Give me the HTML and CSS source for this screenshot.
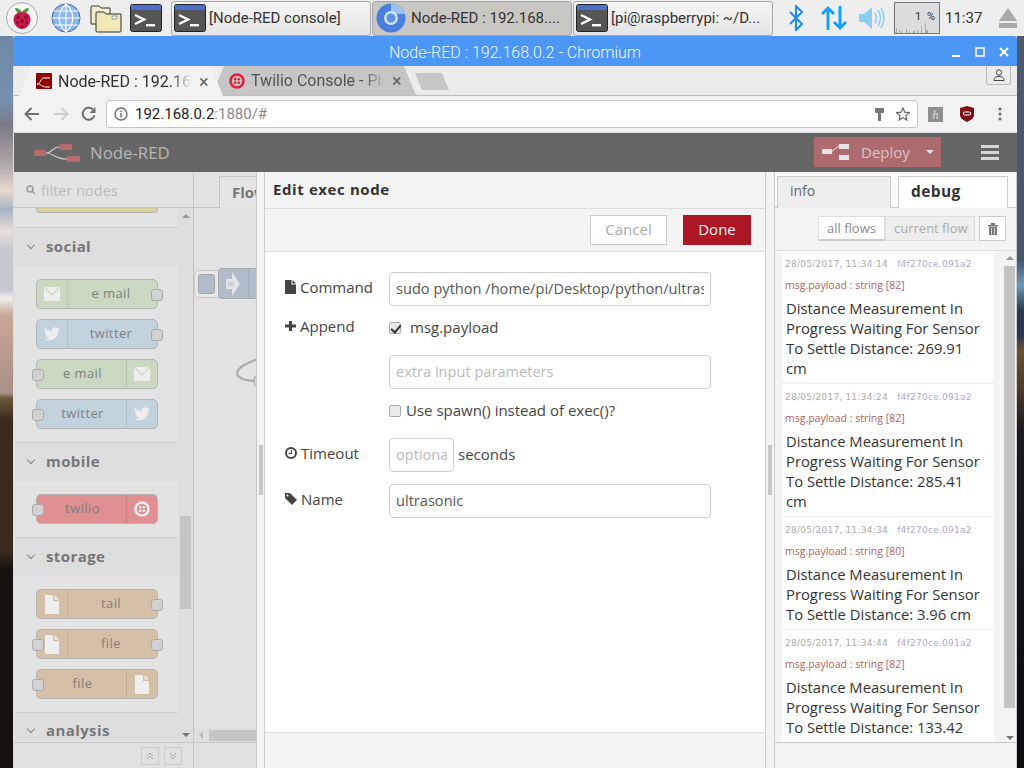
FILE: index.html
```html
<!DOCTYPE html>
<html lang="en">
<head>
    <meta charset="UTF-8">
    <title>Node-RED : 192.168.0.2 - Chromium</title>
    <link rel="stylesheet" href="styles.css">
</head>
<body>
    <svg class="defs" width="0" height="0">
        <symbol id="term" viewBox="0 0 32 28">
            <rect x=".5" y=".5" width="31" height="27" rx="2" fill="#555" stroke="#222"/>
            <rect x="1" y="1" width="30" height="5" fill="#4f6fd0"/>
            <path d="M5 11l9 4.5-9 4.5" fill="none" stroke="#fff" stroke-width="2.4"/>
            <rect x="16" y="20" width="9" height="2.4" fill="#fff"/>
        </symbol>
        <symbol id="mail" viewBox="0 0 16 14">
            <rect width="16" height="14" fill="#eee"/>
            <path d="M0 0l8 8 8-8" fill="none" stroke="currentColor" stroke-width="1.2"/>
        </symbol>
        <symbol id="bird" viewBox="0 0 16 14">
            <path d="M16 2c-.6.3-1.2.4-1.9.5.7-.4 1.2-1 1.4-1.8-.6.4-1.3.7-2.1.8C12.8.6 12 .2 11.1.2 9.3.2 7.8 1.700 7.8 3.500c0 .3 0 .5.1.8C5.200 4.100 2.800 2.800 1.100.8.8 1.300.7 1.900.7 2.500c0 1.100.6 2.100 1.500 2.700-.5 0-1-.2-1.500-.4 0 1.600 1.100 2.900 2.600 3.200-.5.1-1 .2-1.500.1.4 1.300 1.600 2.200 3.100 2.300C3.700 11.500 2 12.100.1 11.900c1.500.9 3.200 1.500 5 1.500 6 0 9.300-5 9.300-9.300v-.4c.7-.5 1.200-1 1.600-1.700z" fill="#eee"/>
        </symbol>
        <symbol id="doc" viewBox="0 0 14 19">
            <path d="M0 0h8v6h6v13H0z" fill="#eee"/>
            <path d="M9.500 0L14 4.500H9.500z" fill="#eee"/>
        </symbol>
        <symbol id="twilio" viewBox="0 0 16 16">
            <circle cx="8" cy="8" r="6.500" fill="none" stroke="currentColor" stroke-width="2.6"/>
            <circle cx="6.200" cy="6.200" r="1.300" fill="currentColor"/><circle cx="9.800" cy="6.200" r="1.300" fill="currentColor"/>
            <circle cx="6.200" cy="9.800" r="1.300" fill="currentColor"/><circle cx="9.800" cy="9.800" r="1.300" fill="currentColor"/>
        </symbol>
        <symbol id="dag" viewBox="0 0 46 18">
            <rect x="0" y="6" width="12" height="6" rx="1.500" fill="#b96a6e"/>
            <rect x="25" y="0" width="13" height="6" rx="1.500" fill="#b96a6e"/>
            <rect x="33" y="12" width="13" height="6" rx="1.500" fill="#b96a6e"/>
            <path d="M12 9c7 0 6-6 13-6M12 9c8 0 8 6 21 6" fill="none" stroke="#ccc" stroke-width="1.2"/>
        </symbol>
    </svg>

    <!-- desktop panel -->
    <div class="panel">
        <div class="launchers">
            <svg class="launch-pi" width="32" height="32" viewBox="0 0 32 32">
                <circle cx="16" cy="16" r="15.500" fill="#f4f4f4" stroke="#aaa"/>
                <path d="M9 6c3 0 5 1.500 7 4 2-2.500 4-4 7-4-.5 3.500-3.500 6-7 6s-6.500-2.500-7-6z" fill="#4c9a3a"/>
                <path d="M16 10c5 0 8.500 3 8.500 7.500S20.500 27 16 27s-8.500-5-8.500-9.500S11 10 16 10z" fill="#c51a4a"/>
                <circle cx="12" cy="15" r="2" fill="#8f0f33"/><circle cx="20" cy="15" r="2" fill="#8f0f33"/>
                <circle cx="16" cy="19" r="2" fill="#8f0f33"/><circle cx="11.500" cy="20.500" r="1.500" fill="#8f0f33"/><circle cx="20.500" cy="20.500" r="1.500" fill="#8f0f33"/><circle cx="16" cy="24.500" r="1.500" fill="#8f0f33"/>
            </svg>
            <svg class="launch-globe" width="30" height="30" viewBox="0 0 30 30">
                <circle cx="15" cy="15" r="14" fill="#8db8ee" stroke="#3a66a8"/>
                <path d="M15 1v28M1 15h28M3 8h24M3 22h24M15 1c-9 8-9 20 0 28M15 1c9 8 9 20 0 28" fill="none" stroke="#fff" stroke-width="1.1"/>
            </svg>
            <svg class="launch-folder" width="32" height="30" viewBox="0 0 32 30">
                <path d="M1 4q0-1 1-1h7l2 2h9v16H1z" fill="#f3edcf" stroke="#333"/>
                <path d="M6 10q0-1 1-1h7l2 2h15v17q0 1-1 1H7q-1 0-1-1z" fill="#f1e8b8" stroke="#333"/>
                <rect x="22" y="13" width="5" height="3" rx="1" fill="#fff" stroke="#555" stroke-width=".6"/>
            </svg>
            <svg class="launch-term" width="32" height="28"><use href="#term"/></svg>
        </div>
        <div class="task"><svg width="32" height="28"><use href="#term"/></svg><span>[Node-RED console]</span></div>
        <div class="task task-on">
            <svg width="30" height="30" viewBox="0 0 30 30">
                <circle cx="15" cy="15" r="14.500" fill="#4a7fe0"/>
                <path d="M15 .5A14.500 14.500 0 0 1 29 11H15z" fill="#9dc1ee"/>
                <circle cx="15" cy="15" r="7" fill="#cfe0f6"/><circle cx="15" cy="15" r="4.500" fill="#5b93e8"/>
            </svg>
            <span>Node-RED : 192.168....</span>
        </div>
        <div class="task"><svg width="32" height="28"><use href="#term"/></svg><span>[pi@raspberrypi: ~/D...</span></div>
        <div class="tray-icons">
            <svg class="sys-bt" width="16" height="26" viewBox="0 0 16 26"><path d="M2 7l12 12-6 6V1l6 6L2 19" fill="none" stroke="#1c8cf0" stroke-width="2"/></svg>
            <svg class="sys-net" width="26" height="26" viewBox="0 0 26 26"><path d="M7 25V3M1 9l6-6 6 6M19 1v22M13 17l6 6 6-6" fill="none" stroke="#1ca0f5" stroke-width="3"/></svg>
            <svg class="sys-vol" width="26" height="24" viewBox="0 0 26 24"><path d="M0 8h5l8-7v22l-8-7H0z" fill="#8ccdf8"/><path d="M16 7q3 5 0 10M19 4q5 8 0 16M22 2q6 10 0 20" fill="none" stroke="#8ccdf8" stroke-width="1.5"/></svg>
            <div class="cpu">
                <span>1 %</span>
                <svg width="44" height="10" viewBox="0 0 44 10"><path d="M1 10V5h1v5h2V7h1v3h1V8h1v2h4V6h1v4h2V8h1v2h3V8h2v2h2V7h1v3h3V3h1v7h3V0h1v7h2v3z" fill="#a7a7a7"/></svg>
            </div>
            <span class="clock">11:37</span>
            <svg class="sys-eject" width="20" height="20" viewBox="0 0 20 20"><path d="M10 0l9 13H1z" fill="#a9a9a9"/><rect x="1" y="15" width="18" height="5" fill="#a9a9a9"/></svg>
        </div>
    </div>

    <div class="win">
        <div class="win-title">
            <span>Node-RED : 192.168.0.2 - Chromium</span>
            <div class="win-btns">
                <svg width="10" height="10"><rect x="1" y="8" width="8" height="2" fill="#fff"/></svg>
                <svg width="10" height="10"><rect x="1" y="1" width="8" height="8" fill="none" stroke="#fff" stroke-width="1.5"/></svg>
                <svg width="10" height="10"><path d="M1 1l8 8M9 1l-8 8" stroke="#fff" stroke-width="2"/></svg>
            </div>
        </div>

        <div class="tabstrip">
            <div class="ctab ctab-on">
                <svg class="favicon" width="16" height="16" viewBox="0 0 16 16"><rect width="16" height="16" rx="1" fill="#8f0000"/><path d="M1 11c4 0 3-6 7-6h6M1 11c5 0 4 3 9 3h4" fill="none" stroke="#fff"/></svg>
                <span class="ctab-text">Node-RED : 192.16</span><span class="ctab-x">×</span>
            </div>
            <div class="ctab">
                <svg class="favicon" width="16" height="16"><use href="#twilio" class="twilio-red"/></svg>
                <span class="ctab-text">Twilio Console - Ph</span><span class="ctab-x">×</span>
            </div>
            <div class="newtab"></div>
            <div class="profile">
                <svg width="12" height="12" viewBox="0 0 12 12"><circle cx="6" cy="3.500" r="2.700" fill="none" stroke="#444"/><path d="M1 11.500v-1c0-2 2-3 5-3s5 1 5 3v1z" fill="none" stroke="#444"/></svg>
            </div>
        </div>

        <div class="toolbar">
            <svg width="16" height="14" viewBox="0 0 16 14"><path d="M15 7H2M7.500 1L1.500 7l6 6" fill="none" stroke="#6e6e6e" stroke-width="2"/></svg>
            <svg class="nav-fwd" width="16" height="14" viewBox="0 0 16 14"><path d="M1 7h13M8.500 1l6 6-6 6" fill="none" stroke="#cfcfcf" stroke-width="2"/></svg>
            <svg class="nav-reload" width="16" height="16" viewBox="0 0 16 16"><path d="M13.500 9.500a6 6 0 1 1-1.500-6" fill="none" stroke="#6e6e6e" stroke-width="2"/><path d="M14.500 1v6h-6z" fill="#6e6e6e"/></svg>
            <div class="omni">
                <svg width="14" height="14" viewBox="0 0 14 14"><circle cx="7" cy="7" r="6" fill="none" stroke="#666" stroke-width="1.3"/><rect x="6.300" y="6" width="1.400" height="4.500" fill="#666"/><rect x="6.300" y="3.500" width="1.400" height="1.500" fill="#666"/></svg>
                <span class="url"><b>192.168.0.2</b>:1880/#</span>
                <svg class="omni-key" width="9" height="13" viewBox="0 0 9 13"><rect width="9" height="5" rx="1" fill="#777"/><rect x="3" y="4" width="3" height="9" fill="#777"/></svg>
                <svg class="omni-star" width="14" height="14" viewBox="0 0 14 14"><path d="M7 1l1.800 4.200 4.600.4-3.500 3 1 4.500L7 10.700l-3.900 2.400 1-4.500-3.500-3 4.600-.4z" fill="none" stroke="#666" stroke-width="1.2"/></svg>
            </div>
            <span class="ext-h">h</span>
            <svg class="ext-ub" width="14" height="16" viewBox="0 0 14 16"><path d="M0 2l7-2 7 2v7c0 3-3 5-7 7-4-2-7-4-7-7z" fill="#7f0f14"/><rect x="3.500" y="6" width="7" height="3" rx="1" fill="none" stroke="#fff"/></svg>
            <svg class="ext-dots" width="4" height="14"><circle cx="2" cy="2" r="1.500" fill="#666"/><circle cx="2" cy="7" r="1.500" fill="#666"/><circle cx="2" cy="12" r="1.500" fill="#666"/></svg>
        </div>

        <div class="nr-header">
            <svg class="nr-logo" width="46" height="18"><use href="#dag"/></svg>
            <span class="nr-name">Node-RED</span>
            <div class="deploy">
                <svg width="27" height="16" viewBox="0 0 27 16"><rect y="5" width="10" height="5" fill="#e6e6e6"/><rect x="17" width="10" height="5" fill="#e6e6e6"/><rect x="17" y="11" width="10" height="5" fill="#e6e6e6"/><path d="M9 8l8-6" stroke="#e6e6e6"/></svg>
                <span>Deploy</span>
                <i class="caret"></i>
            </div>
            <div class="burger"><i></i><i></i><i></i></div>
        </div>

        <div class="nr-main">
            <!-- palette -->
            <div class="palette">
                <div class="filter">
                    <svg width="10" height="10" viewBox="0 0 10 10"><circle cx="4" cy="4" r="3" fill="none" stroke="#999" stroke-width="1.4"/><path d="M6 6l3 3" stroke="#999" stroke-width="1.6"/></svg>
                    <span>filter nodes</span>
                </div>
                <div class="pal-scroll">
                    <div class="pal-list">
                        <div class="pal-stub"></div>
                        <div class="cat">
                            <div class="cat-head"><i class="chev"></i>social</div>
                            <div class="cat-body">
                                <div class="node green icon-left port-r"><span class="ico"><svg width="16" height="14"><use href="#mail" class="mail-line"/></svg></span><em>e mail</em></div>
                                <div class="node blue icon-left port-r"><span class="ico"><svg width="16" height="14"><use href="#bird"/></svg></span><em>twitter</em></div>
                                <div class="node green icon-right port-l"><em>e mail</em><span class="ico"><svg width="16" height="14"><use href="#mail" class="mail-line"/></svg></span></div>
                                <div class="node blue icon-right port-l"><em>twitter</em><span class="ico"><svg width="16" height="14"><use href="#bird"/></svg></span></div>
                            </div>
                        </div>
                        <div class="cat">
                            <div class="cat-head"><i class="chev"></i>mobile</div>
                            <div class="cat-body">
                                <div class="node red icon-right port-l"><em>twilio</em><span class="ico"><svg width="16" height="16"><use href="#twilio" class="twilio-white"/></svg></span></div>
                            </div>
                        </div>
                        <div class="cat">
                            <div class="cat-head"><i class="chev"></i>storage</div>
                            <div class="cat-body">
                                <div class="node tan icon-left port-r"><span class="ico"><svg width="14" height="19"><use href="#doc"/></svg></span><em>tail</em></div>
                                <div class="node tan icon-left port-l port-r"><span class="ico"><svg width="14" height="19"><use href="#doc"/></svg></span><em>file</em></div>
                                <div class="node tan icon-right port-l"><em>file</em><span class="ico"><svg width="14" height="19"><use href="#doc"/></svg></span></div>
                            </div>
                        </div>
                        <div class="cat">
                            <div class="cat-head cat-last"><i class="chev"></i>analysis</div>
                        </div>
                    </div>
                    <div class="pal-bar">
                        <i class="arrow-up"></i>
                        <i class="pal-thumb"></i>
                        <i class="arrow-down"></i>
                    </div>
                </div>
                <div class="pal-foot">
                    <span class="pal-btn">
                        <svg width="8" height="8" viewBox="0 0 8 8"><path d="M1 4l3-3 3 3M1 7l3-3 3 3" fill="none" stroke="#aaa"/></svg>
                    </span>
                    <span class="pal-btn">
                        <svg width="8" height="8" viewBox="0 0 8 8"><path d="M1 1l3 3 3-3M1 4l3 3 3-3" fill="none" stroke="#aaa"/></svg>
                    </span>
                </div>
            </div>

            <!-- workspace, mostly behind the edit tray -->
            <div class="workspace">
                <div class="ws-tabs"><span class="ws-tab">Flow 1</span></div>
                <div class="ws-canvas">
                    <div class="inject-btn"><i></i></div>
                    <div class="flow-node">
                        <svg width="14" height="24" viewBox="0 0 14 24"><path d="M0 7h6V0l8 12-8 12v-7H0z" fill="#e4e4e4"/><path d="M2 11h6M2 13h6" stroke="#b1bccb"/></svg>
                    </div>
                    <svg class="wire" width="30" height="32" viewBox="0 0 30 32"><path d="M26 1C0 8-6 23 26 23" fill="none" stroke="#aaa" stroke-width="2"/><rect x="21" y="18" width="9" height="10" rx="3" fill="#d2d2d2" stroke="#aaa"/></svg>
                </div>
                <div class="ws-hbar"><i class="arrow-left"></i><i class="ws-thumb"></i></div>
                <div class="ws-foot"></div>
            </div>

            <!-- sidebar -->
            <div class="sidebar">
                <div class="side-tabs">
                    <span class="side-tab">info</span>
                    <span class="side-tab side-tab-on">debug</span>
                </div>
                <div class="side-tools">
                    <span class="flt flt-on">all flows</span><span class="flt">current flow</span>
                    <span class="trash">
                        <svg width="10" height="12" viewBox="0 0 10 12"><path d="M0 2h10v1.500H0zM3 0h4v2H3zM1 4h8v8H1z" fill="#777"/><path d="M3.500 5v6M6.500 5v6" stroke="#fff" stroke-width=".7"/></svg>
                    </span>
                </div>
                <div class="debug">
                    <div class="msgs">
                        <div class="msg">
                            <div class="meta">28/05/2017, 11:34:14 <u>f4f270ce.091a2</u></div>
                            <div class="topic">msg.payload : string [82]</div>
                            <div class="body">Distance Measurement In Progress Waiting For Sensor To Settle Distance: 269.91 cm</div>
                        </div>
                        <div class="msg">
                            <div class="meta">28/05/2017, 11:34:24 <u>f4f270ce.091a2</u></div>
                            <div class="topic">msg.payload : string [82]</div>
                            <div class="body">Distance Measurement In Progress Waiting For Sensor To Settle Distance: 285.41 cm</div>
                        </div>
                        <div class="msg">
                            <div class="meta">28/05/2017, 11:34:34 <u>f4f270ce.091a2</u></div>
                            <div class="topic">msg.payload : string [80]</div>
                            <div class="body">Distance Measurement In Progress Waiting For Sensor To Settle Distance: 3.96 cm</div>
                        </div>
                        <div class="msg">
                            <div class="meta">28/05/2017, 11:34:44 <u>f4f270ce.091a2</u></div>
                            <div class="topic">msg.payload : string [82]</div>
                            <div class="body">Distance Measurement In Progress Waiting For Sensor To Settle Distance: 133.42 cm</div>
                        </div>
                    </div>
                    <div class="deb-bar">
                        <i class="arrow-up"></i>
                        <i class="deb-thumb"></i>
                        <i class="arrow-down"></i>
                    </div>
                </div>
                <div class="side-foot"></div>
            </div>

            <!-- edit dialog slides over the workspace -->
            <div class="tray">
                <div class="tray-grip"><i></i></div>
                <div class="tray-main">
                    <div class="tray-title">Edit exec node</div>
                    <div class="tray-btns">
                        <span class="btn btn-cancel">Cancel</span>
                        <span class="btn btn-done">Done</span>
                    </div>
                    <div class="form">
                        <div class="row">
                            <label><svg width="11" height="14" viewBox="0 0 11 14"><path d="M0 0h6.500v4.500H11V14H0zM7.500 0L11 3.500H7.500z" fill="#444"/></svg>Command</label>
                            <div class="input"><span>sudo python /home/pi/Desktop/python/ultrasonic.py</span></div>
                        </div>
                        <div class="row row-short">
                            <label><svg width="11" height="14" viewBox="0 0 11 14"><path d="M4 2h3v3.500h4v3H7V12H4V8.500H0v-3h4z" fill="#444"/></svg>Append</label>
                            <span class="check check-on"></span><span class="check-label">msg.payload</span>
                        </div>
                        <div class="row">
                            <label></label>
                            <div class="input ph"><span>extra input parameters</span></div>
                        </div>
                        <div class="row row-short">
                            <label></label>
                            <span class="check"></span><span class="check-label2">Use spawn() instead of exec()?</span>
                        </div>
                        <div class="row">
                            <label><svg width="12" height="12" viewBox="0 0 12 12"><circle cx="6" cy="6" r="5" fill="none" stroke="#444" stroke-width="2"/><path d="M6.500 3v3.500H3.500" fill="none" stroke="#444" stroke-width="1.2"/></svg>Timeout</label>
                            <div class="input input-small ph"><span>optional</span></div>
                            <span class="unit">seconds</span>
                        </div>
                        <div class="row">
                            <label><svg width="12" height="12" viewBox="0 0 12 12"><path d="M0 0h5l7 7-5 5-7-7z" fill="#444"/><circle cx="2.500" cy="2.500" r="1" fill="#fff"/></svg>Name</label>
                            <div class="input"><span>ultrasonic</span></div>
                        </div>
                    </div>
                    <div class="tray-foot"></div>
                </div>
                <div class="tray-grip tray-grip-r"><i></i></div>
            </div>
        </div>
    </div>
</body>
</html>
```

FILE: styles.css
```css
* {
    box-sizing: border-box;
}
html, body {
    margin: 0;
    height: 768px;
    overflow: hidden;
}
body {
    width: 1024px;
    font-family: "Open Sans", sans-serif;
    background:
        linear-gradient(to bottom, #6f87a5 36px, #7590ad 100px, #7d7a85 125px, #b0a8aa 165px, #e8d8d0 190px, #a8b4c4 210px, #eadfd8 231px, #c4c8d0 250px, #c6c8d0 290px, #eee 298px, #c8a898 315px, #a89088 393px, #6a5a3a 398px, #3a2a20 420px, #3a2a20 550px, #15110e 570px, #15110e 768px) left top / 14px 100% no-repeat,
        linear-gradient(to bottom, #4f5a6e 36px, #46546c 260px, #6f9ab8 285px, #2a3a50 310px, #2a3450 335px, #6a5030 350px, #4a3a2a 390px, #1a1a20 430px, #0b0b0e 768px) right top / 10px 100% no-repeat;
}
.defs {
    position: absolute;
}

/* desktop panel */
.panel {
    height: 36px;
    background: #eeeeee;
    display: flex;
    align-items: center;
}
.launchers {
    width: 171px;
    flex: none;
    display: flex;
    align-items: center;
}
.launch-pi { margin-left: 6px; }
.launch-globe { margin-left: 13px; }
.launch-folder { margin-left: 9px; }
.launch-term { margin-left: 8px; }
.task {
    width: 200px;
    height: 35px;
    flex: none;
    margin-right: 1px;
    padding-left: 2px;
    display: flex;
    align-items: center;
    gap: 3px;
    border: 1px solid #a8a8a8;
    border-radius: 3px;
    background: linear-gradient(#f6f6f6, #e4e4e4);
    font-family: Roboto, sans-serif;
    font-size: 15px;
    color: #333;
    white-space: nowrap;
    overflow: hidden;
}
.task-on {
    background: #c9c7c4;
    padding-left: 3px;
    gap: 5px;
}
.tray-icons {
    flex: 1;
    display: flex;
    align-items: center;
    font-family: Roboto, sans-serif;
    color: #333;
}
.sys-bt { margin-left: 14px; }
.sys-net { margin-left: 17px; }
.sys-vol { margin-left: 12px; }
.cpu {
    margin-left: 9px;
    width: 46px;
    height: 32px;
    border: 1px solid #777;
    background: #dcdcdc;
    position: relative;
    font-size: 11px;
    text-align: right;
    padding: 7px 4px 0 0;
    word-spacing: 3px;
}
.cpu svg {
    position: absolute;
    left: 0;
    bottom: 0;
}
.clock {
    margin-left: 5px;
    font-size: 15px;
}
.sys-eject { margin-left: 16px; }

/* browser window */
.win {
    margin-left: 13px;
    width: 1004px;
    height: 732px;
    background: #f2f2f2;
    display: flex;
    flex-direction: column;
    border-left: 1px solid #ddd;
}
.win-title {
    height: 30px;
    flex: none;
    margin-left: -1px;
    background: #4c97f5;
    border-radius: 3px 3px 0 0;
    position: relative;
    text-align: center;
    line-height: 33px;
    font-family: Roboto, sans-serif;
    font-weight: 300;
    font-size: 16px;
    color: #f0f5fd;
}
.win-btns {
    position: absolute;
    right: 8px;
    top: 11px;
    display: flex;
    gap: 14px;
}
.tabstrip {
    height: 30px;
    flex: none;
    background: #ececec;
    border-bottom: 1px solid #bdbdbd;
    display: flex;
    padding-left: 5px;
    position: relative;
    font-family: Roboto, sans-serif;
    font-size: 16px;
}
.ctab {
    width: 204px;
    height: 29px;
    flex: none;
    margin-right: -11px;
    background: #c6c6c6;
    clip-path: polygon(0 100%, 12px 0, 192px 0, 204px 100%);
    display: flex;
    align-items: center;
    padding: 0 10px 0 17px;
    color: #555;
    white-space: nowrap;
}
.ctab-on {
    background: #f2f2f2;
    color: #333;
    height: 30px;
    z-index: 1;
}
.favicon {
    flex: none;
    margin-right: 6px;
}
.ctab-text {
    width: 133px;
    flex: none;
    overflow: hidden;
    mask-image: linear-gradient(to right, #000 85%, transparent);
}
.ctab-x {
    margin-left: 8px;
    font-size: 18px;
    color: #666;
}
.newtab {
    margin: 7px 0 0 10px;
    width: 34px;
    height: 17px;
    background: #c6c6c6;
    clip-path: polygon(0 0, 27px 0, 34px 100%, 7px 100%);
}
.profile {
    position: absolute;
    right: 6px;
    top: 0;
    width: 25px;
    height: 19px;
    border: 1px solid #bbb;
    border-top: none;
    border-radius: 0 0 3px 3px;
    display: flex;
    align-items: center;
    justify-content: center;
}
.toolbar {
    height: 36px;
    flex: none;
    background: #f2f2f2;
    display: flex;
    align-items: center;
    padding-left: 10px;
}
.nav-fwd { margin-left: 13px; }
.nav-reload { margin-left: 12px; }
.omni {
    margin-left: 9px;
    width: 812px;
    height: 28px;
    background: #fff;
    border: 1px solid #c6c6c6;
    border-radius: 3px;
    display: flex;
    align-items: center;
    padding-left: 7px;
    font-family: Roboto, sans-serif;
    font-size: 15px;
    color: #888;
}
.url {
    margin-left: 7px;
    flex: 1;
}
.url b {
    font-weight: 400;
    color: #222;
}
.omni-key { margin-right: 12px; }
.omni-star { margin-right: 7px; }
.ext-h {
    margin-left: 10px;
    width: 15px;
    height: 15px;
    background: #8f8f8f;
    color: #ddd;
    font: italic 13px/15px "Liberation Serif", serif;
    text-align: center;
}
.ext-ub { margin-left: 17px; }
.ext-dots { margin-left: 24px; }

/* node-red */
.nr-header {
    height: 40px;
    flex: none;
    background: #666;
    border-top: 1px solid #dcdcdc;
    display: flex;
    align-items: center;
    padding-left: 20px;
    color: #b5b5b5;
}
.nr-name {
    width: 80px;
    margin-left: 10px;
    font-size: 16.8px;
    white-space: nowrap;
}
.deploy {
    margin: -1px 0 0 644px;
    width: 127px;
    height: 30px;
    background: #ad6b70;
    color: #d6c5c6;
    display: flex;
    align-items: center;
    padding-left: 8px;
    font-size: 15px;
}
.deploy span {
    margin-left: 12px;
}
.caret {
    margin-left: 16px;
    border: 4px solid transparent;
    border-top: 4px solid #e0e0e0;
    border-bottom: none;
}
.burger {
    margin-left: 40px;
    width: 18px;
    display: flex;
    flex-direction: column;
    gap: 3px;
}
.burger i {
    height: 3px;
    background: #d6d6d6;
}
.nr-main {
    flex: 1;
    min-height: 0;
    display: flex;
    position: relative;
    background: #e3e3e3;
}

/* palette */
.palette {
    width: 180px;
    flex: none;
    display: flex;
    flex-direction: column;
    border-right: 1px solid #c6c6c6;
}
.filter {
    height: 36px;
    flex: none;
    display: flex;
    align-items: center;
    gap: 5px;
    padding: 1px 0 0 12px;
    border-bottom: 1px solid #c6c6c6;
    font-size: 14.5px;
    color: #bbb;
}
.pal-scroll {
    flex: 1;
    min-height: 0;
    display: flex;
}
.pal-list {
    width: 163px;
    margin-left: 1px;
    overflow: hidden;
}
.pal-stub {
    margin-left: 21px;
    width: 122px;
    height: 5px;
    background: #d9d39b;
    border: 1px solid #b5b5b5;
    border-top: none;
    border-radius: 0 0 4px 4px;
}
.cat {
    margin-top: 14px;
    border-top: 1px solid #cdcdcd;
}
.cat + .cat {
    margin-top: 0;
}
.cat-head {
    height: 38px;
    background: #dedede;
    font-weight: 700;
    font-size: 15px;
    color: #777;
    display: flex;
    align-items: center;
    letter-spacing: .4px;
    padding: 0 0 2px 13px;
}
.cat-last {
    height: 28px;
    padding-top: 8px;
}
.chev {
    width: 6px;
    height: 6px;
    margin: -3px 12px 0 0;
    border: solid #888;
    border-width: 0 1.3px 1.3px 0;
    transform: rotate(45deg);
}
.cat-body {
    padding: 13px 0 13px 21px;
    background: #e3e3e3;
    display: flex;
    flex-direction: column;
    gap: 10px;
}
.node {
    width: 122px;
    height: 30px;
    border: 1px solid #b5b5b5;
    border-radius: 5px;
    display: flex;
    position: relative;
    font-size: 13px;
    letter-spacing: .4px;
    color: #7f7f7f;
}
.node em {
    flex: 1;
    font-style: normal;
    text-align: center;
    line-height: 26px;
}
.icon-left em {
    padding-right: 3px;
}
.icon-right em {
    padding-left: 2px;
}
.ico {
    width: 31px;
    flex: none;
    display: flex;
    align-items: center;
    justify-content: center;
}
.icon-left .ico { border-right: 1px solid rgba(0, 0, 0, .09); }
.icon-right .ico { border-left: 1px solid rgba(0, 0, 0, .09); }
.port-r::after, .port-l::before {
    content: "";
    position: absolute;
    top: 9px;
    width: 10px;
    height: 10px;
    background: #d2d2d2;
    border: 1px solid #aaa;
    border-radius: 3px;
}
.port-r::after { right: -6px; }
.port-l::before { left: -5px; }
.green { background: #cbd9c3; }
.blue { background: #c3d3de; }
.red { background: #e08f92; }
.tan { background: #d4c0a6; }
.mail-line { color: #cbd9c3; }
.twilio-white { color: #eee; }
.twilio-red { color: #e31e3c; }
.pal-bar {
    width: 15px;
    display: flex;
    flex-direction: column;
    align-items: center;
    background: #dedede;
    padding: 6px 0 5px;
}
.arrow-up, .arrow-down, .arrow-left {
    border: 4px solid transparent;
    flex: none;
}
.arrow-up {
    border-bottom: 4px solid #999;
    border-top: none;
}
.arrow-down {
    border-top: 4px solid #777;
    border-bottom: none;
}
.arrow-left {
    border-right: 4px solid #bbb;
    border-left: none;
}
.pal-thumb {
    width: 11px;
    height: 93px;
    margin: 298px 0 auto;
    background: #c4c4c4;
}
.pal-foot {
    height: 26px;
    flex: none;
    background: #e0e0e0;
    border-top: 1px solid #c6c6c6;
    display: flex;
    justify-content: flex-end;
    align-items: center;
    gap: 5px;
    padding-right: 11px;
}
.pal-btn {
    width: 18px;
    height: 18px;
    border: 1px solid #ccc;
    display: flex;
    align-items: center;
    justify-content: center;
}

/* workspace */
.workspace {
    flex: 1;
    min-width: 0;
    display: flex;
    flex-direction: column;
}
.ws-tabs {
    height: 36px;
    flex: none;
    padding: 4px 0 0 25px;
    border-bottom: 1px solid #c6c6c6;
    background: #e3e3e3;
}
.ws-tab {
    display: block;
    width: 38px;
    height: 32px;
    border: 1px solid #c6c6c6;
    border-width: 1px 0 0 1px;
    background: #e5e5e5;
    font-weight: 700;
    font-size: 15px;
    color: #777;
    line-height: 30px;
    padding-left: 12px;
    white-space: nowrap;
    overflow: hidden;
}
.ws-canvas {
    flex: 1;
    position: relative;
}
.inject-btn {
    position: absolute;
    left: 0;
    top: 62px;
    width: 26px;
    height: 28px;
    background: #e8e8e8;
    border: 1px solid #ccc;
    border-radius: 4px 0 0 4px;
    padding: 3px;
}
.inject-btn i {
    display: block;
    width: 17px;
    height: 20px;
    background: #b1bccb;
    border: 1px solid #a6a6a6;
    border-radius: 3px;
}
.flow-node {
    position: absolute;
    left: 24px;
    top: 60px;
    width: 60px;
    height: 31px;
    background: #b1bccb;
    border: 1px solid #aaa;
    border-radius: 4px;
    padding: 3px 0 0 7px;
}
.flow-node::after {
    content: "";
    position: absolute;
    left: 29px;
    top: 0;
    bottom: 0;
    border-left: 1px solid rgba(0, 0, 0, .09);
}
.wire {
    position: absolute;
    left: 39px;
    top: 150px;
}
.ws-hbar {
    height: 14px;
    flex: none;
    display: flex;
    align-items: center;
    padding-left: 5px;
    background: #dedede;
}
.ws-thumb {
    width: 200px;
    height: 11px;
    flex: none;
    margin-left: 6px;
    background: #c4c4c4;
}
.ws-foot {
    height: 26px;
    flex: none;
    border-top: 1px solid #c6c6c6;
    background: #e0e0e0;
}

/* sidebar */
.sidebar {
    width: 243px;
    flex: none;
    display: flex;
    flex-direction: column;
    background: #f3f3f3;
    border-left: 1px solid #ccc;
    border-right: 1px solid #ccc;
}
.side-tabs {
    height: 36px;
    flex: none;
    padding: 4px 0 0 2px;
    display: flex;
    gap: 7px;
    background: #fafafa;
    border-bottom: 1px solid #ccc;
}
.side-tab {
    width: 114px;
    height: 32px;
    border: 1px solid #ccc;
    border-bottom: none;
    background: #eee;
    font-size: 14px;
    color: #666;
    padding: 4px 0 0 12px;
}
.side-tab-on {
    width: 110px;
    padding-top: 3px;
    background: #fff;
    font-weight: 700;
    font-size: 15.5px;
    letter-spacing: .4px;
    color: #333;
}
.side-tools {
    height: 43px;
    flex: none;
    padding: 8px 0 0 43px;
    display: flex;
    border-bottom: 1px solid #ddd;
    font-size: 13px;
    color: #888;
}
.flt {
    height: 25px;
    padding: 2px 8px;
    width: 90px;
    background: #eee;
    border: 1px solid #ddd;
    color: #aaa;
    white-space: nowrap;
}
.flt-on {
    width: 67px;
    background: #fff;
    color: #888;
    border-bottom: 2px solid #ccc;
}
.trash {
    margin-left: 4px;
    width: 27px;
    height: 25px;
    background: #fff;
    border: 1px solid #ccc;
    display: flex;
    align-items: center;
    justify-content: center;
}
.debug {
    flex: 1;
    min-height: 0;
    display: flex;
}
.msgs {
    width: 212px;
    flex: none;
    margin-left: 7px;
    background: #fff;
    overflow: hidden;
}
.msg {
    padding: 6px 8px 5px 4px;
    border-bottom: 1px solid #eee;
}
.meta {
    height: 14px;
    margin-left: -1px;
    font-family: "DejaVu Sans", sans-serif;
    font-size: 9px;
    letter-spacing: .25px;
    line-height: 14px;
    color: #aaa;
    white-space: nowrap;
}
.meta u {
    text-decoration: none;
    color: #aca8cf;
    margin-left: 6px;
}
.topic {
    height: 27px;
    margin-left: -1px;
    font-size: 10.5px;
    line-height: 28px;
    color: #ad5f68;
    white-space: nowrap;
}
.body {
    font-size: 14.8px;
    line-height: 20px;
    color: #333;
}
.deb-bar {
    width: 13px;
    flex: none;
    margin-left: 9px;
    display: flex;
    flex-direction: column;
    align-items: center;
    padding: 5px 0 2px;
}
.deb-thumb {
    width: 11px;
    height: 442px;
    margin: 6px 0 auto;
    background: #c4c4c4;
}
.side-foot {
    height: 26px;
    flex: none;
    border-top: 1px solid #c6c6c6;
}

/* edit tray */
.tray {
    position: absolute;
    left: 242px;
    top: 0;
    bottom: 0;
    width: 518px;
    display: flex;
    background: #f3f3f3;
    border-left: 1px solid #c6c6c6;
}
.tray-grip {
    width: 7px;
    flex: none;
    display: flex;
    align-items: center;
}
.tray-grip i {
    width: 4px;
    height: 50px;
    margin-left: 2px;
    background: #c8c8c8;
}
.tray-grip-r {
    width: 8px;
}
.tray-main {
    width: 502px;
    flex: none;
    background: #fff;
    border: solid #ccc;
    border-width: 0 1px;
    display: flex;
    flex-direction: column;
}
.tray-title {
    height: 37px;
    flex: none;
    background: #f3f3f3;
    border-bottom: 1px solid #ddd;
    padding: 7px 0 0 8px;
    font-weight: 700;
    font-size: 15px;
    letter-spacing: .6px;
    color: #333;
}
.tray-btns {
    height: 43px;
    flex: none;
    background: #f3f3f3;
    border-bottom: 1px solid #ddd;
    display: flex;
    justify-content: flex-end;
    gap: 16px;
    padding: 6px 14px 0 0;
}
.btn {
    height: 30px;
    font-size: 15px;
    line-height: 27px;
    text-align: center;
}
.btn-cancel {
    width: 77px;
    background: #fff;
    border: 1px solid #ccc;
    color: #aaa;
}
.btn-done {
    width: 68px;
    background: #ad1625;
    color: #eee;
    line-height: 29px;
}
.form {
    flex: 1;
    padding: 20px 0 0 20px;
    font-size: 15px;
    color: #444;
}
.row {
    display: flex;
    align-items: center;
    margin-bottom: 12px;
}
.row-short {
    height: 20px;
    margin-bottom: 17px;
}
.row label {
    width: 104px;
    flex: none;
    display: flex;
    align-items: center;
    gap: 4px;
    margin-top: -5px;
}
.input {
    width: 322px;
    height: 34px;
    padding: 0 6px;
    border: 1px solid #ccc;
    border-radius: 4px;
    font-size: 14.6px;
    line-height: 31px;
    color: #555;
}
.input span {
    display: block;
    white-space: nowrap;
    overflow: hidden;
}
.ph {
    color: #bbb;
}
.input-small {
    width: 65px;
}
.unit {
    margin: -2px 0 0 4px;
}
.check {
    width: 12px;
    height: 12px;
    flex: none;
    background: #e9e9e9;
    border: 1px solid #aaa;
    border-radius: 2px;
    position: relative;
}
.check-on::after {
    content: "";
    position: absolute;
    left: 3px;
    top: 0;
    width: 4px;
    height: 8px;
    border: solid #333;
    border-width: 0 2px 2px 0;
    transform: rotate(40deg);
}
.check-label {
    margin: -2px 0 0 9px;
}
.check-label2 {
    margin: -2px 0 0 5px;
}
.tray-foot {
    height: 36px;
    flex: none;
    background: #f3f3f3;
    border-top: 1px solid #ddd;
}
```
